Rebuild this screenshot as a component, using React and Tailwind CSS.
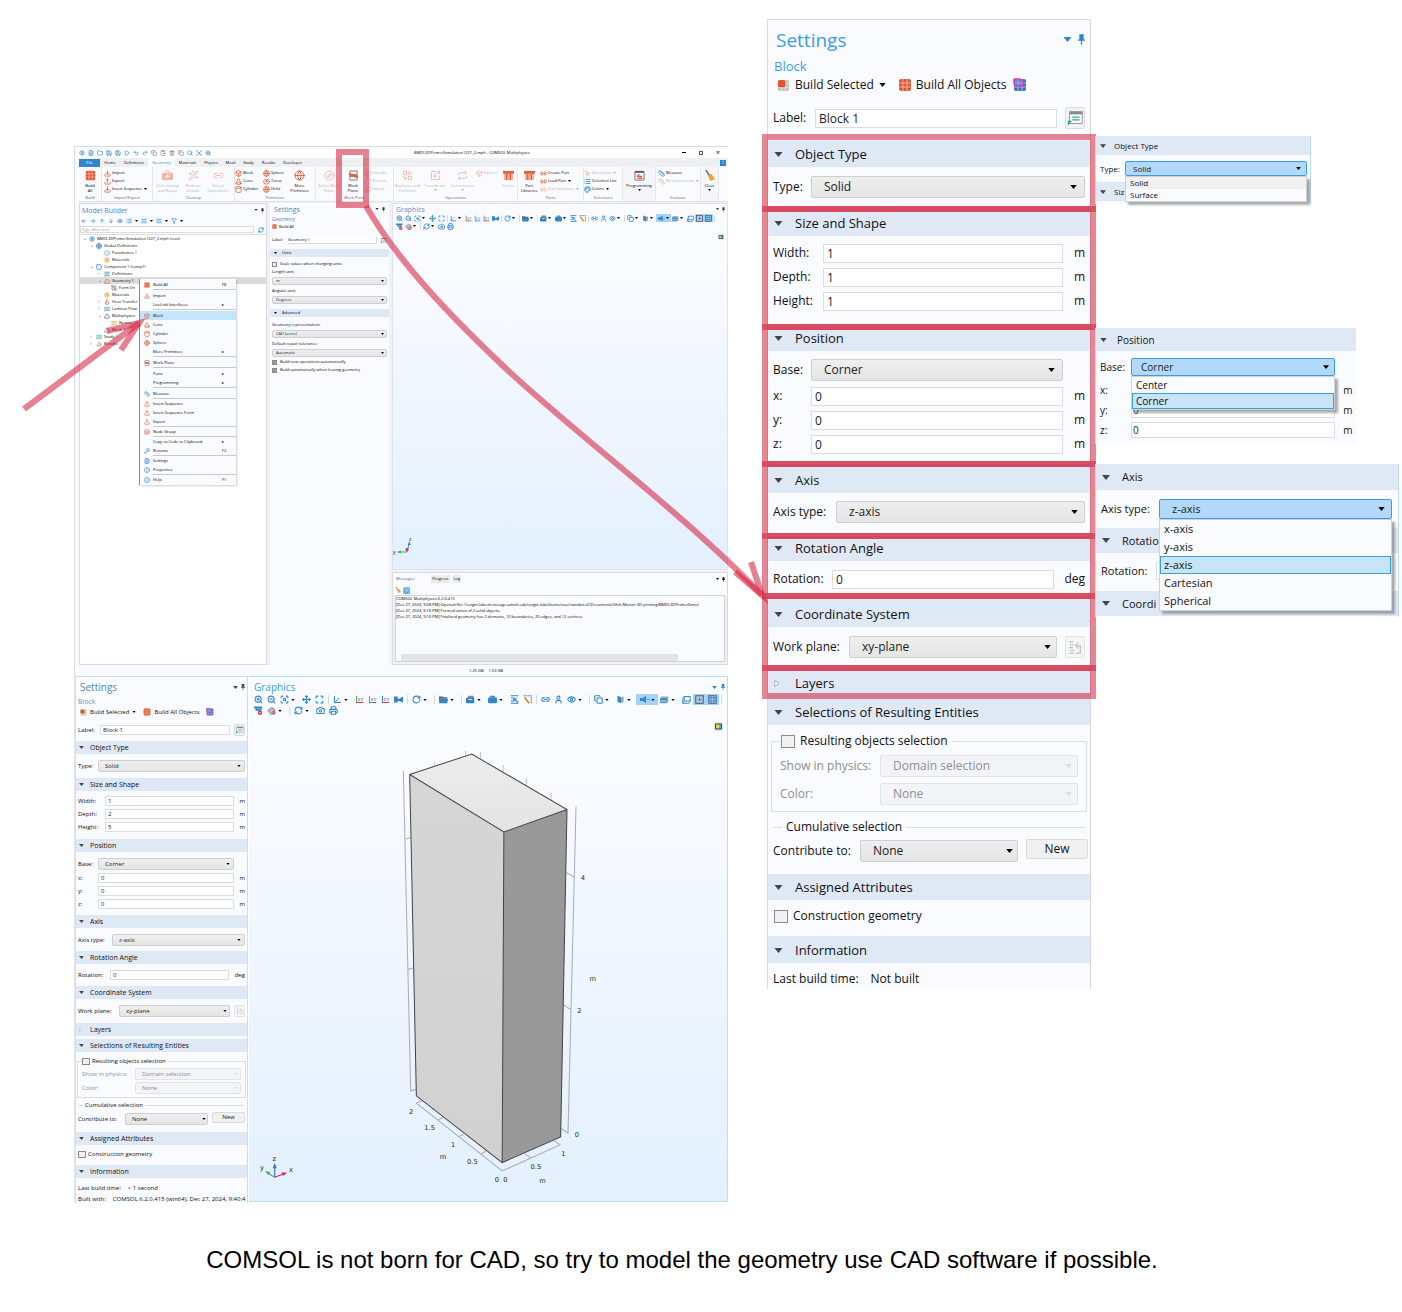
import React, { useId } from "react";
import {
  ZoomIn, ZoomOut, Search, Move, Maximize, Axis3d, RotateCw, Folder, Printer, Camera, Link2, Box,
  Cylinder, Cone, Torus, Globe, Ruler, Trash2, Brush, Layers, Download, Upload, Save, Undo2, Redo2, Copy,
  ClipboardPaste, FileText, ScanSearch, MousePointer, User, Eye, Square, RefreshCw, Eraser, Play, Wand2, Briefcase,
  Compass, Combine, Scaling, Repeat, BookOpen, List, Palette, Terminal, ArrowLeft, ArrowRight, ArrowUp, ArrowDown,
  AlignJustify, Funnel, Settings as Gear, Info, Flame, Waves, Triangle, Wrench, ChartNoAxesColumn,
} from "lucide-react";

/* ---------- shared controls ---------- */

function Caret({ className = "w-2 h-[5px] text-black" }) {
  return (
    <svg viewBox="0 0 8 5" className={className} fill="currentColor" aria-hidden="true">
      <path d="M0 0h8L4 5z" />
    </svg>
  );
}

function PinIcon({ className }) {
  return (
    <svg viewBox="0 0 8 12" className={className} fill="currentColor" aria-hidden="true">
      <path d="M1.500 0h5v6H8v1.500H0V6h1.500zM3.300 7.500h1.400V12H3.300z" />
    </svg>
  );
}

function Select({ id, value, className, caret, disabled, label, tone }) {
  return (
    <span className="relative flex flex-1 min-w-0 items-center">
      <select
        id={id}
        aria-label={label}
        disabled={disabled}
        defaultValue={value}
        className={
          "appearance-none w-full border rounded-[2px] outline-none " +
          (tone || (disabled ? "bg-[#f3f4f7] border-[#e2e3e6] text-[#8d8f93] opacity-100 " : "bg-linear-to-b from-[#efefef] to-[#e5e5e5] border-[#cfcfcf] text-[#1c1c1c] ")) +
          " " + className
        }
      >
        <option>{value}</option>
      </select>
      <span className="pointer-events-none absolute right-[3%] flex">
        <Caret className={caret + (disabled ? " text-[#dcdce0]" : " text-black")} />
      </span>
    </span>
  );
}

const inputTone = "min-w-0 flex-1 bg-white border border-[#dcdcdc] outline-none text-[#1c1c1c] ";

function Field({ k, label, lw, value, unit, uw }) {
  const id = useId();
  return (
    <div className={"flex items-center " + k.row}>
      <label htmlFor={id} className={"shrink-0 whitespace-nowrap " + lw}>{label}</label>
      <input id={id} defaultValue={value} className={inputTone + k.input} />
      {unit && <span className={"shrink-0 text-right " + uw}>{unit}</span>}
    </div>
  );
}

function Choice({ k, label, lw, value, pad = "", disabled, after }) {
  const id = useId();
  return (
    <div className={"flex items-center " + k.row + " " + pad}>
      <label htmlFor={id} className={"shrink-0 whitespace-nowrap " + lw}>{label}</label>
      <Select id={id} value={value} className={k.select} caret={k.caret} disabled={disabled} />
      {after}
    </div>
  );
}

function Tick({ k, label, checked }) {
  return (
    <label className={"flex items-center whitespace-nowrap " + k.tickGap}>
      <input type="checkbox" defaultChecked={checked} className={"appearance-none border border-[#8b8b8b] bg-[#f1f1f1] " + k.tick} />
      {label}
    </label>
  );
}

function Section({ k, title, size, head, body, children, marked, closed }) {
  return (
    <section className={"relative flex flex-col " + size}>
      <div className={"flex items-end shrink-0 bg-[#dfe8f5] " + head}>
        <h3 className={"flex items-center whitespace-nowrap " + k.head}>
          {closed ? (
            <svg viewBox="0 0 6 8" className={k.closed} fill="#fff" stroke="#a9adb3" aria-hidden="true"><path d="M.8 .8v6.4L5 4z" /></svg>
          ) : (
            <Caret className={k.headCaret} />
          )}
          {title}
        </h3>
      </div>
      <div className={body}>{children}</div>
      {marked && <div className="pointer-events-none absolute z-10 -inset-x-1.5 -inset-y-[3px] border-[6px] border-[#d4203c]/55" />}
    </section>
  );
}

function GridIcon({ kind, className }) {
  const base = kind === "all" ? "#e2562f" : kind === "blue" ? "#3f6fc0" : "#c3c3c3";
  return (
    <svg viewBox="0 0 14 14" className={className} aria-hidden="true">
      <rect x="1" y="1" width="12" height="12" rx="2" fill={base} />
      <path d="M5 1v12M9 1v12M1 5h12M1 9h12" stroke="#fff" strokeWidth=".9" opacity=".6" />
      {kind === "sel" && <rect x="1" y="1" width="8" height="8" rx="2" fill="#e2562f" />}
      {kind === "blue" && <path d="M1 1h6l3 2v5H3L1 6z" fill="#8f8fe0" fillOpacity=".6" stroke="#d43fb4" strokeWidth="1.4" />}
    </svg>
  );
}

function LabelIcon({ className }) {
  return (
    <svg viewBox="0 0 20 20" className={className} aria-hidden="true">
      <rect x="4" y="3" width="14" height="13" fill="#fff" stroke="#8c8c8c" />
      <path d="M4 3h14v3H4z" fill="#8c8c8c" />
      <path d="M7 9h8M7 12h8" stroke="#27a98b" strokeWidth="1.3" />
      <path d="M2 18v-5h5L5.500 14.500 2.500 18z" fill="#27a98b" />
    </svg>
  );
}

const LG = {
  root: "text-[12px] leading-[14px]",
  row: "h-6",
  input: "h-[19px] px-[3px] text-[12px]",
  select: "h-[22px] pl-3 text-[12px]",
  caret: "w-[7px] h-[4px]",
  head: "h-[26px] text-[13px] pl-1.5",
  headCaret: "w-[9px] h-[5px] mr-3 text-[#444]",
  closed: "w-[6px] h-[9px] mr-[15px]",
  tick: "w-[14px] h-[13px]",
  tickGap: "gap-[5px]",
  unit: "w-[22px]",
};
const SM = {
  root: "text-[6px] leading-[8px]",
  row: "h-[13px]",
  input: "h-[10px] px-[2px] text-[6px]",
  select: "h-[12px] pl-1.5 text-[6px]",
  caret: "w-[4px] h-[2px]",
  head: "h-[13px] text-[7px] pl-[3px]",
  headCaret: "w-[5px] h-[3px] mr-[6px] text-[#444]",
  closed: "w-[3px] h-[5px] mr-[8px]",
  tick: "w-[8px] h-[7px]",
  tickGap: "gap-[2px]",
  unit: "w-[11px]",
};

function BlockSettings({ big }) {
  const k = big ? LG : SM;
  const c = (a, b) => (big ? a : b);
  const body = c("px-[5px]", "px-[2px]");
  const dims = c(["1", "1", "1"], ["1", "2", "5"]);
  const m = c(big, false);
  return (
    <aside className={"relative flex flex-col bg-[#fafbff] border-l border-r border-t border-[#d9dbe0] text-[#111] " + k.root}>
      <header className={c("h-[117px] px-[5px]", "h-[64px] px-[2px]")}>
        <div className={"flex items-center " + c("h-[38px] pt-[1px] pl-[3px]", "h-[20px] pl-[2px]")}>
          <h2 className={"flex-1 " + c("text-[19px] text-[#3a9bea]", "text-[10px] text-[#5b83b5]")}>Settings</h2>
          <Caret className={c("w-[9px] h-[5px] text-[#2f86cc] mr-[6px]", "w-[5px] h-[3px] text-[#444] mr-[3px]")} />
          <PinIcon className={c("w-[7px] h-[11px] text-[#2f86cc]", "w-[4px] h-[6px] text-[#444]")} />
        </div>
        <div className={c("text-[13px] h-[17px] leading-[17px] pl-px text-[#3a9bea]", "text-[7px] h-[9px] leading-[9px] text-[#6d94c4]")}>Block</div>
        <div className={"flex items-center " + c("h-[20px] pl-1", "h-[12px] pl-0.5")}>
          <button className={"flex items-center whitespace-nowrap " + c("gap-[5px]", "gap-[3px]")}>
            <GridIcon kind="sel" className={c("w-[13px] h-[13px]", "w-[7px] h-[7px]")} />Build Selected
            <Caret className={c("w-[7px] h-[4px]", "w-[4px] h-[2px]")} />
          </button>
          <button className={"flex items-center whitespace-nowrap " + c("gap-[4px] ml-[12px]", "gap-[3px] ml-[7px]")}>
            <GridIcon kind="all" className={c("w-[14px] h-[14px]", "w-[8px] h-[8px]")} />Build All Objects
          </button>
          <button aria-label="Build preview" className={c("ml-[7px]", "ml-[6px]")}>
            <GridIcon kind="blue" className={c("w-[14px] h-[14px]", "w-[8px] h-[8px]")} />
          </button>
        </div>
        <div className={"flex items-center " + c("mt-[11px] h-6", "mt-[5px] h-[13px]")}>
          <label htmlFor={c("lbl-l", "lbl-s")} className={c("w-[42px]", "w-[22px]")}>Label:</label>
          <input id={c("lbl-l", "lbl-s")} defaultValue="Block 1" className={inputTone + k.input} />
          <button aria-label="Edit label" className={"border border-[#dcdcdc] bg-[#f3f3f3] rounded-[2px] " + c("ml-2 w-5 h-[22px]", "ml-1 w-[11px] h-[12px]")}>
            <LabelIcon className="w-full h-full" />
          </button>
        </div>
      </header>

      <Section k={k} marked={m} title="Object Type" size={c("h-[72px]", "h-[37px]")} head={c("h-[26px] mt-1", "h-[13px]")} body={body + c(" pt-2", " pt-[5px]")}>
        <Choice k={k} label="Type:" lw={c("w-[38px]", "w-[20px]")} value="Solid" />
      </Section>
      <Section k={k} marked={m} title="Size and Shape" size={c("h-[118px]", "h-[61px]")} head={c("h-[27px]", "h-[13px]")} body={body + c(" pt-[5px]", " pt-[3px]")}>
        {["Width:", "Depth:", "Height:"].map((l, i) => (
          <Field key={l} k={k} label={l} lw={c("w-[50px]", "w-[27px]")} value={dims[i]} unit="m" uw={k.unit} />
        ))}
      </Section>
      <Section k={k} marked={m} title="Position" size={c("h-[137px]", "h-[76px]")} head={c("h-[24px]", "h-[13px]")} body={body + c(" pt-[7px]", " pt-[5px]")}>
        <Choice k={k} label="Base:" lw={c("w-[38px]", "w-[20px]")} value="Corner" after={<span className={k.unit} />} />
        <div className={c("mt-0.5", "mt-px")}>
          {["x:", "y:", "z:"].map((l) => (
            <Field key={l} k={k} label={l} lw={c("w-[38px]", "w-[20px]")} value="0" unit="m" uw={k.unit} />
          ))}
        </div>
      </Section>
      <Section k={k} marked={m} title="Axis" size={c("h-[72px]", "h-[36px]")} head={c("h-[29px]", "h-[13px]")} body={body + c(" pt-[7px]", " pt-[5px]")}>
        <Choice k={k} label="Axis type:" lw={c("w-[63px]", "w-[34px]")} value="z-axis" />
      </Section>
      <Section k={k} marked={m} title="Rotation Angle" size={c("h-[60px]", "h-[35px]")} head={c("h-[25px]", "h-[13px]")} body={body + c(" pt-[6px]", " pt-[4px]")}>
        <Field k={k} label="Rotation:" lw={c("w-[59px]", "w-[32px]")} value="0" unit="deg" uw={c("w-[31px]", "w-[16px]")} />
      </Section>
      <Section k={k} marked={m} title="Coordinate System" size={c("h-[72px]", "h-[37px]")} head={c("h-[31px]", "h-[13px]")} body={body + c(" pt-2", " pt-[5px]")}>
        <Choice k={k} label="Work plane:" lw={c("w-[76px]", "w-[41px]")} value="xy-plane" after={
          <button disabled aria-label="Go to source" className={"flex items-center justify-center border border-[#e3e3e3] bg-[#f5f5f5] rounded-[2px] " + c("ml-2 w-5 h-[22px]", "ml-1 w-[11px] h-[12px]")}>
            <svg viewBox="0 0 14 16" className="w-3/4 h-3/4" fill="none" stroke="#c4c4c4" strokeWidth="1.400" aria-hidden="true"><path d="M1 2h4M2 5h4M1 8h4M2 11h4M1 14h5M9 6h4v8H8M11 3L8 6l3 3" /></svg>
          </button>
        } />
      </Section>
      <Section k={k} marked={m} closed title="Layers" size={c("h-[28px]", "h-[16px]")} head={c("h-[28px]", "h-[13px]")} body="" />
      <Section k={k} title="Selections of Resulting Entities" size={c("h-[178px]", "h-[93px]")} head={c("h-[29px]", "h-[13px]")} body="">
        <fieldset className={"border border-[#dcdde1] text-[#8d8f93] " + c("mx-[3px] mt-[9px] pb-[3px] px-[8px]", "mx-px mt-[5px] pb-[2px] px-[4px]")}>
          <legend className={"text-[#111] " + c("px-[1px] pr-1 h-[14px]", "h-[8px] pr-[2px]")}>
            <Tick k={k} label="Resulting objects selection" />
          </legend>
          <div className={c("pt-1", "pt-[2px]")}>
            <Choice k={{ ...k, row: c("h-7", "h-[14px]") }} label="Show in physics:" lw={c("w-[100px]", "w-[53px]")} value="Domain selection" disabled />
            <Choice k={{ ...k, row: c("h-7", "h-[14px]") }} label="Color:" lw={c("w-[100px]", "w-[53px]")} value="None" disabled />
          </div>
        </fieldset>
        <div className={body}>
          <div className={"flex items-center " + c("mt-2 h-[14px] gap-1", "mt-[3px] h-[8px] gap-[2px]")}>
            <span className={"h-px bg-[#dcdde1] " + c("w-[9px]", "w-[5px]")} />
            Cumulative selection
            <span className="h-px flex-1 bg-[#dcdde1]" />
          </div>
          <Choice k={k} pad={c("mt-[5px]", "mt-[3px]")} label="Contribute to:" lw={c("w-[87px]", "w-[47px]")} value="None" after={
            <button className={"border border-[#dcdcdc] bg-[#f1f1f2] rounded-[2px] self-start " + c("ml-2 -mr-[3px] w-[62px] h-5 leading-[18px]", "ml-1 w-[33px] h-[11px] leading-[9px]")}>New</button>
          } />
        </div>
      </Section>
      <Section k={k} title="Assigned Attributes" size={c("h-[62px]", "h-[33px]")} head={c("h-[26px]", "h-[13px]")} body={body + c(" pt-[9px] pl-[6px]", " pt-[5px]")}>
        <Tick k={k} label="Construction geometry" />
      </Section>
      <Section k={k} title="Information" size={c("h-[53px]", "h-[38px]")} head={c("h-[27px]", "h-[13px]")} body={body}>
        <dl className={"flex " + c("pt-[9px] gap-3", "pt-[6px] gap-[7px]")}><dt>Last build time:</dt><dd>{c("Not built", "< 1 second")}</dd></dl>
        {!big && <dl className="flex pt-[3px] gap-[7px] whitespace-nowrap"><dt>Built with:</dt><dd>COMSOL 6.2.0.415 (win64), Dec 27, 2024, 9:40:4</dd></dl>}
      </Section>
    </aside>
  );
}

/* ---------- graphics toolbar ---------- */

const TOOLS = [
  ZoomIn, ZoomOut, ScanSearch, "v", Move, Maximize, "|", Axis3d, "v",
  "xy", "yz", "xz", "cam", "|", RotateCw, "v", "|", "folder", "v", "|", "case", "v", "case2", "v", "pick", "wand", "|",
  Link2, User, Eye, "v", "|", Copy, "v", "layer", "v", "HL", "win", "v", "frame", "HA", "HG", "|",
];

function MiniIcon({ t, size }) {
  const p = { viewBox: "0 0 12 12", className: size, "aria-hidden": true };
  const B = "#2f86cc";
  if (t === "xy" || t === "yz" || t === "xz") {
    const col = t === "xz" ? B : "#4caf50";
    return (
      <svg {...p} fill="none">
        <path d="M2 1v10" stroke={col} strokeWidth="1.400" />
        <path d="M2 10h9" stroke={t === "yz" ? B : "#d8336b"} strokeWidth="1.400" />
        <path d="M4 4l3 4M7 4L4 8M8 4l1.500 2L11 4M9.500 6v2" stroke="#777" strokeWidth=".8" />
      </svg>
    );
  }
  if (t === "cam") return <svg {...p} fill={B}><path d="M0 2h5v8H0zM5 5h2l5-3v8L7 8H5z" /></svg>;
  if (t === "folder") return <svg {...p}><path d="M0 2h5l1 1h5v2H2L0 10z" fill="#666" /><path d="M1 5h11l-1 6H0z" fill={B} /></svg>;
  if (t === "case") return <svg {...p}><path d="M1 5l2-4h7l1 4z" fill="#888" /><rect y="4" width="11" height="7" rx="1" fill={B} /><path d="M3 6h5" stroke="#fff" /></svg>;
  if (t === "case2") return <svg {...p} fill={B}><path d="M3 1h6v2H3z" /><rect y="3" width="12" height="8" rx="2" /></svg>;
  if (t === "pick") return <svg {...p} fill="none" stroke={B} strokeWidth="1.500"><path d="M1 1h10M1 4h5M1 8h3M1 11h10M5 5l6 5M5 5v4M5 5h4" /></svg>;
  if (t === "hide") return <svg {...p} fill="none"><path d="M0 2h11M2 5h8" stroke={B} strokeWidth="2.500" /><circle cx="8" cy="9" r="3" fill="#d8336b" /><path d="M6.500 9h3" stroke="#fff" /></svg>;
  if (t === "pal") return <svg {...p} fill="none"><path d="M1 6l5-4 4 2v6l-5 1z" fill="#b9bcc2" stroke="#777" /><circle cx="9" cy="9" r="2" stroke="#d8336b" /></svg>;
  if (t === "wand") return <svg {...p} fill="none" strokeWidth="1.500"><path d="M1 1h10v10" stroke={B} strokeDasharray="2 1" /><path d="M2 3l6 8" stroke="#e58a2a" strokeWidth="2.500" /></svg>;
  if (t === "layer") return <svg {...p}><path d="M2 1l5 2v8L2 9z" fill={B} /><path d="M7 3l3-1v7l-3 2z" fill="#999" /></svg>;
  if (t === "win") return <svg {...p}><rect x="1" y="2" width="10" height="8" fill="#9aa" /><rect y="4" width="9" height="7" fill={B} opacity=".8" /><path d="M1 8h7" stroke="#fff" /></svg>;
  if (t === "frame") return <svg {...p} fill="none" stroke={B} strokeWidth="1.300"><path d="M3 2h8v6H3zM1 11l2-3M3 2L1 5v6M1 11h8l2-3" /></svg>;
  if (t === "HA") return <svg {...p} fill="none" strokeWidth="1.300"><rect x="1" y="1" width="10" height="10" stroke="#555" /><path d="M6 3v5" stroke={B} /><path d="M6 8L3 5" stroke="#4caf50" /><path d="M6 8l3-3" stroke="#d8336b" /></svg>;
  if (t === "HG") return <svg {...p} fill="none" stroke={B} strokeWidth="1.200"><rect x="1" y="1" width="10" height="10" stroke="#555" /><path d="M4 1v10M8 1v10M1 4h10M1 8h10" /></svg>;
  if (t === "HL") return <svg {...p} fill={B}><path d="M0 4h4l4-3v10L4 8H0z" /><path d="M9 6h3" stroke={B} /></svg>;
  const I = t;
  return <I className={size + " text-[#2f86cc]"} strokeWidth={2.8} />;
}

function ToolRow({ items, big }) {
  const slot = big ? "w-[13px] h-[11px]" : "w-[9px] h-[8px]";
  const size = big ? "w-[9px] h-[9px]" : "w-[7px] h-[7px]";
  return (
    <div className="flex items-center overflow-hidden">
      {items.map((t, i) => {
        if (t === "v") return <Caret key={i} className={"shrink-0 text-black " + (big ? "w-[4px] h-[2px] mr-[5px]" : "w-[3px] h-[2px] mr-[3px]")} />;
        if (t === "|") return <span key={i} className={"shrink-0 border-l border-[#d5d8de] " + (big ? "w-[3px] h-[9px] ml-[2px]" : "w-[2px] h-[7px] ml-px")} />;
        if (t === "HL") {
          return (
            <button key={i} aria-label="Scene light" className={"flex shrink-0 items-center justify-center bg-[#a3d3fb] " + (big ? "w-[22px] gap-[2px] h-[11px]" : "w-[15px] gap-px h-[8px]")}>
              <MiniIcon t={t} size={size} /><Caret className={big ? "w-[4px] h-[2px]" : "w-[3px] h-[2px]"} />
            </button>
          );
        }
        const hl = t === "HA" || t === "HG";
        return (
          <button key={i} aria-label={"Tool " + (i + 1)} className={"flex shrink-0 items-center justify-center " + slot + (hl ? " bg-[#a3d3fb]" : "")}>
            <MiniIcon t={t} size={size} />
          </button>
        );
      })}
    </div>
  );
}

function GraphicsHead({ big }) {
  return (
    <div className={big ? "pl-[3px]" : "pl-0.5"}>
      <div className={"flex items-center " + (big ? "h-[17px] pt-[3px] pl-[2px] pr-[2px]" : "h-[10px] pl-px pr-[2px]")}>
        <h2 className={"flex-1 leading-none " + (big ? "text-[10px] text-[#3a9bea]" : "text-[7px] text-[#6d8fc0]")}>Graphics</h2>
        <Caret className={big ? "w-[5px] h-[3px] mr-1 text-[#2f86cc]" : "w-[3px] h-[2px] mr-[3px] text-[#333]"} />
        <PinIcon className={big ? "w-[4px] h-[6px] text-[#2f86cc]" : "w-[3px] h-[5px] text-[#333]"} />
      </div>
      <ToolRow items={TOOLS} big={big} />
      <ToolRow items={["hide", "pal", "v", "|", RefreshCw, "v", Camera, Printer]} big={big} />
    </div>
  );
}

function LegendIcon({ className }) {
  return (
    <svg viewBox="0 0 9 9" className={className} aria-hidden="true">
      <rect x="0" y="0" width="9" height="9" rx="1.500" fill="#e4e6ea" />
      <rect x="1" y="1.500" width="7" height="6" rx="1" fill="#1c3f9a" />
      <rect x="2" y="2.500" width="3" height="4" fill="#f2d13b" />
      <rect x="5" y="2.500" width="2" height="4" fill="#4fc0d8" />
    </svg>
  );
}

/* ---------- main window, upper half ---------- */

const O = "text-[#e0623a]";
const F = "text-[#f0b8a6]";

function Tall({ icon: I, lines, w, faded, caret }) {
  return (
    <button className={"flex shrink-0 flex-col items-center pt-[3px] " + w + (faded ? " text-[#b5b5b5]" : " text-black")}>
      <I className={"w-[11px] h-[11px] mb-[2px] " + (faded ? F : O)} />
      {lines.map((l) => <span key={l} className="leading-[5px] whitespace-nowrap">{l}</span>)}
      {caret && <Caret className="w-[3px] h-[2px] mt-px" />}
    </button>
  );
}

function Stack({ items, w, faded }) {
  return (
    <div className={"flex shrink-0 flex-col pt-[2px] " + w}>
      {items.map(([I, l, v, f, tint]) => (
        <button key={l} className={"flex items-center gap-px h-[8px] whitespace-nowrap " + (faded || f ? "text-[#b5b5b5]" : "text-black")}>
          <I className={"w-[7px] h-[7px] " + (faded || f ? F : tint || O)} strokeWidth={2.8} />{l}{v ? <Caret className="w-[3px] h-[2px] ml-px" /> : null}
        </button>
      ))}
    </div>
  );
}

function Group({ name, children, className = "" }) {
  return (
    <div className={"flex flex-col shrink-0 border-r border-[#e6e7eb] " + className}>
      <div className="flex h-[29px]">{children}</div>
      <div className="text-center text-[#666] leading-[6px]">{name}</div>
    </div>
  );
}

function SolidSquare({ className }) {
  return <GridIcon kind="all" className={className} />;
}

function SolidBox({ className }) {
  return (
    <svg viewBox="0 0 12 12" className={className} aria-hidden="true">
      <rect x="1" y="2" width="10" height="9" fill="#f3b29c" />
      <path d="M0 1h12v3H0z" fill="#e0623a" />
      <path d="M4 4v7M8 4v7" stroke="#e0623a" strokeWidth="1.500" />
    </svg>
  );
}

function ToolCase({ className }) {
  return (
    <svg viewBox="0 0 12 12" className={className} aria-hidden="true">
      <path d="M4 3V1h4v2" fill="none" stroke="currentColor" />
      <rect x="0" y="3" width="12" height="8" rx="1" fill="currentColor" />
      <path d="M6 5v4M4 7h4" stroke="#fff" strokeWidth="1.200" />
    </svg>
  );
}

function Broom({ className }) {
  return (
    <svg viewBox="0 0 12 12" className={className} aria-hidden="true">
      <path d="M2 0l4 6" stroke="#666" strokeWidth="1.500" />
      <path d="M4 6l4-2 4 6-5 2z" fill="#efa23c" />
    </svg>
  );
}

function ProgramIcon({ className }) {
  return (
    <svg viewBox="0 0 12 12" className={className} fill="none" aria-hidden="true">
      <path d="M1 2h10" stroke="#555" strokeWidth="2" /><path d="M1 2v9h10V2" stroke="#777" />
      <path d="M3 7h6M4 9h5M6 5L3 7" stroke="#e0623a" strokeWidth="1.400" />
    </svg>
  );
}

function WorkPlaneIcon({ className }) {
  return (
    <svg viewBox="0 0 12 12" className={className} fill="none" aria-hidden="true">
      <path d="M2 1h8v4H2zM2 7h8v4H2z" stroke="#777" />
      <path d="M1 3l10 3v3L1 6z" fill="#e0623a" />
    </svg>
  );
}

const TREE = [
  [0, "v", Gear, "#2f86cc", "BMDL3DPrimerSimulation1227_2.mph (root)"],
  [1, "v", Globe, "#2f86cc", "Global Definitions"],
  [2, "", Info, "#7ab3e0", "Parameters 1"],
  [2, "", Gear, "#e89a2e", "Materials"],
  [1, "v", Square, "#2f86cc", "Component 1 (comp1)"],
  [2, ">", AlignJustify, "#2f86cc", "Definitions"],
  [2, "v", Triangle, "#e0623a", "Geometry 1"],
  [3, "", Combine, "#888", "Form Un"],
  [2, "", Gear, "#e89a2e", "Materials"],
  [2, ">", Flame, "#e0623a", "Heat Transfer"],
  [2, ">", Waves, "#2f86cc", "Laminar Flow"],
  [2, "v", Triangle, "#666", "Multiphysics"],
  [3, "", Waves, "#e89a2e", "Noniso"],
  [2, "", Triangle, "#888", "Mesh 1"],
  [1, ">", Waves, "#27a98b", "Study 1"],
  [1, ">", ChartNoAxesColumn, "#888", "Results"],
];
const INDENT = ["pl-[3px]", "pl-[10px]", "pl-[18px]", "pl-[25px]"];

const MENU = [
  [SolidSquare, "Build All", "F8"], "-", [Download, "Import"], [null, "LiveLink Interfaces", ">"], "-",
  [Box, "Block", "", true], [Cone, "Cone"], [Cylinder, "Cylinder"], [Globe, "Sphere"], [null, "More Primitives", ">"], "-",
  [WorkPlaneIcon, "Work Plane"], "-", [null, "Parts", ">"], [null, "Programming", ">"], "-", [Ruler, "Measure"], "-",
  [Upload, "Insert Sequence"], [Upload, "Insert Sequence From"], [Upload, "Export"], "-", [Layers, "Node Group"], "-",
  [null, "Copy as Code to Clipboard", ">"], [Wrench, "Rename", "F2"], "-", [FileText, "Settings"], [Info, "Properties"], "-", [Info, "Help", "F1"],
];

function ContextMenu() {
  return (
    <ul role="menu" className="absolute left-[59px] top-[75px] w-[97px] border-l border-[#8a8a8a] bg-[#fafbff] pt-px pb-px shadow-[1px_1px_2px_#0003] text-black">
      {MENU.map((m, i) => {
        if (m === "-") return <li key={i} role="separator" className={"ml-[13px] h-px bg-[#c9c9cd] " + (i < 16 ? "mb-px" : "")} />;
        const [I, l, hint, on] = m;
        const blue = i > 23 || l === "Measure";
        return (
          <li key={i}>
            <button role="menuitem" className={"flex w-full items-center h-[9px] " + (on ? "bg-[#c4e4f9]" : "")}>
              <span className="w-[13px] flex justify-center">{I && <I className={"w-[6px] h-[6px] " + (blue ? "text-[#2f86cc]" : O)} strokeWidth={2.5} />}</span>
              <span className="flex-1 text-left whitespace-nowrap">{l}</span>
              <span className="w-[14px] text-left">{hint === ">" ? "\u25B8" : hint}</span>
            </button>
          </li>
        );
      })}
    </ul>
  );
}

function PaneTitle({ children }) {
  return (
    <div className="flex items-center h-[12px] pl-0.5 pr-[2px]">
      <h2 className="flex-1 text-[7px] leading-none text-[#5b83b5]">{children}</h2>
      <Caret className="w-[4px] h-[2px] mr-[3px] text-[#333]" />
      <PinIcon className="w-[3px] h-[5px] text-[#333]" />
    </div>
  );
}

function TinySelect({ label, value }) {
  const id = useId();
  return (
    <div className="flex flex-col">
      <label htmlFor={id} className="h-[9px] leading-[9px] whitespace-nowrap">{label}</label>
      <div className="flex h-[10px]"><Select id={id} value={value} className="h-[8px] pl-[3px] text-[4px]" caret="w-[3px] h-[2px]" /></div>
    </div>
  );
}

const TINY = { tick: "w-[5px] h-[5px]", tickGap: "gap-[3px]" };

function MainWindow() {
  return (
    <div className="flex flex-col h-[530px] overflow-hidden border-l border-t border-[#d9dbe0] bg-[#fafbff] text-[4px] leading-[6px] text-black">
      <div className="flex items-center h-[11px] px-[3px] bg-white gap-[2px]">
        {[Gear, FileText, Folder, Save, Save, Play, Undo2, Redo2, Copy, ClipboardPaste, Trash2, Copy, Search, ScanSearch, ZoomIn].map((I, i) => (
          <button key={i} aria-label={"Quick action " + (i + 1)} className="flex w-[7px] justify-center"><I className={"w-[6px] h-[6px] " + (i > 7 && i < 12 ? "text-[#888]" : "text-[#2f86cc]")} strokeWidth={2.5} /></button>
        ))}
        <span className="flex-1 text-center pl-[154px] whitespace-nowrap">BMDL3DPrimerSimulation1227_2.mph - COMSOL Multiphysics</span>
        <span className="flex w-[146px] justify-end gap-[13px] pr-[5px] items-center">
          <button aria-label="Minimize" className="w-[4px] h-px bg-black" />
          <button aria-label="Maximize" className="w-[4px] h-[4px] border border-[#555]" />
          <button aria-label="Close" className="text-[7px] leading-none">×</button>
        </span>
      </div>
      <nav className="flex items-center h-[9px] ml-1 bg-[#eff0f2] pr-[2px]">
        <button className="w-[21px] h-[8px] bg-[#2f86cc] text-white">File</button>
        {[["Home", "w-[20px]"], ["Definitions", "w-[28px]"], ["Geometry", "w-[27px]"], ["Materials", "w-[25px]"], ["Physics", "w-[22px]"], ["Mesh", "w-[17px]"], ["Study", "w-[19px]"], ["Results", "w-[21px]"], ["Developer", "w-[27px]"]].map(([t, w]) => (
          <button key={t} className={"h-[9px] " + w + (t === "Geometry" ? " bg-[#fafbff] text-[#2f86cc]" : "")}>{t}</button>
        ))}
        <span className="flex-1" />
        <button className="w-[6px] h-[6px] bg-[#2f86cc] text-white leading-[6px]">?</button>
      </nav>
      <div className="flex h-[35px] ml-1 border-b border-[#dfe1e6] overflow-hidden">
        <Group name="Build" className="w-[23px]"><Tall icon={SolidSquare} lines={["Build", "All"]} w="w-[22px]" /></Group>
        <Group name="Import/Export" className="w-[51px]">
          <Stack w="w-full pl-[2px]" items={[[Download, "Import"], [Upload, "Export"], [Download, "Insert Sequence", 1]]} />
        </Group>
        <Group name="Cleanup" className="w-[82px]">
          <Tall faded icon={ToolCase} lines={["Defeaturing", "and Repair"]} w="w-[29px]" />
          <Tall faded icon={Wand2} lines={["Remove", "Details"]} w="w-[22px]" />
          <Tall faded icon={Link2} lines={["Virtual", "Operations"]} w="w-[28px]" />
        </Group>
        <Group name="Primitives" className="w-[81px]">
          <Stack w="w-[28px]" items={[[Box, "Block"], [Cone, "Cone"], [Cylinder, "Cylinder"]]} />
          <Stack w="w-[23px]" items={[[Globe, "Sphere"], [Torus, "Torus"], [Globe, "Helix"]]} />
          <Tall icon={Globe} lines={["More", "Primitives"]} w="w-[27px]" />
        </Group>
        <Group name="Work Plane" className="w-[78px]">
          <Tall faded icon={Compass} lines={["Select Work", "Plane"]} w="w-[26px]" />
          <Tall icon={WorkPlaneIcon} lines={["Work", "Plane"]} w="w-[22px]" />
          <Stack faded w="w-[28px]" items={[[Box, "Extrude"], [RotateCw, "Revolve"], [Scaling, "Sweep"]]} />
        </Group>
        <Group name="Operations" className="w-[124px]">
          <Tall faded icon={Combine} lines={["Booleans and", "Partitions"]} w="w-[27px]" />
          <Tall faded icon={Scaling} lines={["Transforms"]} w="w-[28px]" caret />
          <Tall faded icon={Repeat} lines={["Conversions"]} w="w-[27px]" caret />
          <Stack faded w="w-[22px]" items={[[Box, "Extract"]]} />
          <Tall faded icon={SolidBox} lines={["Delete"]} w="w-[20px]" />
        </Group>
        <Group name="Parts" className="w-[66px]">
          <Tall icon={SolidBox} lines={["Part", "Libraries"]} w="w-[22px]" />
          <Stack w="w-[42px]" items={[[Link2, "Create Part"], [Link2, "Load Part", 1], [Link2, "Part Instances", 1, 1]]} />
        </Group>
        <Group name="Selections" className="w-[39px]">
          <Stack w="w-[38px]" items={[[MousePointer, "Selections", 1, 1], [List, "Selection List", 0, 0, "text-[#2f86cc]"], [Palette, "Colors", 1, 0, "text-[#2f86cc]"]]} />
        </Group>
        <Group name="" className="w-[33px] bg-[#f5f6f9]"><Tall icon={ProgramIcon} lines={["Programming"]} w="w-[32px]" caret /></Group>
        <Group name="Evaluate" className="w-[45px]">
          <Stack w="w-[44px] pl-[2px]" items={[[Ruler, "Measure", 0, 0, "text-[#2f86cc]"], [Ruler, "Measurements", 1, 1]]} />
        </Group>
        <Group name="" className="w-[18px] bg-[#f5f6f9]"><Tall icon={Broom} lines={["Clear"]} w="w-[17px]" caret /></Group>
      </div>

      <div className="flex flex-1 min-h-0 ml-1 pt-px gap-[3px] bg-[#f0f1f4]">
        <section className="relative flex flex-col w-[188px] border border-[#d9dbe0] bg-white">
          <div className="bg-[#fafbff]">
            <PaneTitle>Model Builder</PaneTitle>
            <div className="flex items-center h-[9px] gap-[3px] px-px">
              {[ArrowLeft, ArrowRight, ArrowUp, ArrowDown, Eye, List, "v", AlignJustify, "v", AlignJustify, "v", Funnel, "v"].map((I, i) =>
                I === "v" ? <Caret key={i} className="w-[3px] h-[2px]" /> : (
                  <button key={i} aria-label={"Tree action " + (i + 1)}><I className="w-[6px] h-[6px] text-[#2f86cc]" strokeWidth={2.6} /></button>
                )
              )}
            </div>
            <div className="flex items-center h-[9px]">
              <input aria-label="Filter" placeholder="Type filter text" className="w-[174px] h-[7px] border border-[#dcdcdc] bg-white pl-px text-[4px]" />
              <button aria-label="Refresh" className="ml-1"><RefreshCw className="w-[6px] h-[6px] text-[#2f86cc]" strokeWidth={3} /></button>
            </div>
          </div>
          <ul className="border-t border-[#dcdcdc]">
            {TREE.map(([d, x, I, c, t], i) => (
              <li key={i} className={"flex items-center h-[7px] whitespace-nowrap " + INDENT[d] + (i === 6 ? " bg-[#dcdcdc]" : "")}>
                <span className="w-[4px] text-[5px] leading-none text-[#555]">{x === "v" ? "\u2304" : x === ">" ? "\u203A" : ""}</span>
                <I className="w-[6px] h-[6px] mx-[2px]" color={c} strokeWidth={3} />
                {t}
              </li>
            ))}
          </ul>
          <ContextMenu />
        </section>

        <section className="w-[119px] px-[2px] bg-[#fafbff]">
          <PaneTitle>Settings</PaneTitle>
          <div className="text-[5px] h-[8px] leading-[8px] text-[#5b83b5]">Geometry</div>
          <button className="flex items-center gap-[2px] h-[7px]"><SolidSquare className="w-[5px] h-[5px]" />Build All</button>
          <div className="flex items-center mt-[5px] h-[10px]">
            <label htmlFor="geo" className="w-[16px]">Label:</label>
            <input id="geo" defaultValue="Geometry 1" className="min-w-0 flex-1 h-[7px] border-b border-r border-[#dcdcdc] bg-white text-[4px]" />
            <LabelIcon className="w-[7px] h-[7px] ml-[3px]" />
          </div>
          <h3 className="flex items-center gap-[5px] h-[8px] mt-[4px] -mx-[2px] pl-[4px] bg-[#dfe8f5]"><Caret className="w-[3px] h-[2px]" />Units</h3>
          <div className="mt-[4px]"><Tick k={TINY} label="Scale values when changing units" /></div>
          <TinySelect label="Length unit:" value="m" />
          <TinySelect label="Angular unit:" value="Degrees" />
          <h3 className="flex items-center gap-[5px] h-[8px] mt-[4px] mb-[3px] -mx-[2px] pl-[4px] bg-[#dfe8f5]"><Caret className="w-[3px] h-[2px]" />Advanced</h3>
          <TinySelect label="Geometry representation:" value="CAD kernel" />
          <TinySelect label="Default repair tolerance:" value="Automatic" />
          <div className="flex flex-col gap-[2px] mt-px">
            {["Build new operations automatically", "Build automatically when leaving geometry"].map((l) => (
              <Tick key={l} k={{ ...TINY, tick: "w-[5px] h-[5px] checked:bg-[#999]" }} checked label={l} />
            ))}
          </div>
        </section>

        <div className="flex flex-1 min-w-0 flex-col gap-[2px]">
          <section className="flex flex-col h-[367px] border border-[#dde3ee] bg-linear-to-b from-[#fafbff] from-15% to-[#e4f0fe]">
            <GraphicsHead />
            <div className="flex justify-end pr-[3px] pt-[4px]"><LegendIcon className="w-[6px] h-[6px]" /></div>
            <div className="flex-1" />
            <svg viewBox="0 0 24 20" className="w-[24px] h-[20px] mb-[12px]" aria-label="Axis triad">
              <path d="M14 15H5" stroke="#4caf50" /><path d="M4 15l4-1.500v3z" fill="#4caf50" />
              <path d="M14 15l2-8" stroke="#2f86cc" /><path d="M16 4l2 4h-3z" fill="#2f86cc" />
              <circle cx="14" cy="12.500" r="1.600" fill="#d8336b" />
              <text x="0" y="16.500" fontSize="5">y</text><text x="16" y="3.500" fontSize="5">z</text>
            </svg>
          </section>
          <section className="flex flex-col flex-1 min-h-0 border border-[#d9dbe0]">
            <div className="flex items-center h-[12px] gap-[3px] px-[2px] bg-[#fafbff]">
              <button className="h-[8px] px-[1px] pr-[14px] text-[#2f6fb5]">Messages</button>
              <button className="h-[8px] px-[1px] bg-[#ebebed]">Progress</button>
              <button className="h-[8px] px-[1px] bg-[#ebebed]">Log</button>
              <span className="flex-1" />
              <Caret className="w-[3px] h-[2px]" /><PinIcon className="w-[3px] h-[5px]" />
            </div>
            <div className="flex items-center h-[10px] gap-[2px] px-[2px] bg-[#fafbff]">
              <button aria-label="Clear messages"><Broom className="w-[6px] h-[6px]" /></button>
              <button aria-label="Scroll lock" className="bg-[#8fc6f5]"><Eraser className="w-[7px] h-[7px] text-[#2f86cc]" /></button>
            </div>
            <div className="flex flex-1 min-h-0 flex-col mx-[2px] mb-[2px] border border-[#d0d2d7] bg-[#fafbff] whitespace-nowrap overflow-hidden">
              <p>COMSOL Multiphysics 6.2.0.415</p>
              <p>[Dec 27, 2024, 9:08 PM] Opened file: \\engin-labs.m.storage.umich.edu\engin-labs\home\user\windat.v2\Documents\Shih Marian 3D printing\BMDL3DPrimerSimul</p>
              <p>[Dec 27, 2024, 9:16 PM] Formed union of 2 solid objects.</p>
              <p>[Dec 27, 2024, 9:16 PM] Finalized geometry has 2 domains, 10 boundaries, 20 edges, and 12 vertices.</p>
              <span className="flex-1" />
              <div className="flex h-[7px] px-[5px]"><span className="w-[87%] bg-[#e3e3e5]" /></div>
            </div>
          </section>
        </div>
      </div>
      <footer className="flex h-[11px] items-center justify-center gap-[5px] pl-[169px]"><span>1.25 GB</span><span>1.53 GB</span></footer>
    </div>
  );
}

/* ---------- block plot ---------- */

const TICKS = [
  [990, 420, "4"], [980, 818, "2"], [972, 1188, "0"], [1016, 720, "m"], [932, 1245, "1"], [840, 1284, "0.5"], [866, 1327, "m"],
  [476, 1119, "2"], [522, 1167, "1.5"], [602, 1217, "1"], [568, 1255, "m"], [650, 1269, "0.5"], [733, 1322, "0"], [758, 1322, "0"],
];

function BlockPlot() {
  return (
    <svg viewBox="-3 -69 1431 1446" className="block w-full flex-1 min-h-0 font-['DejaVu_Sans']" role="img" aria-label="Block geometry, 1 by 2 by 5 metres">
      <defs>
        <linearGradient id="side" x1="0" y1="0" x2="0" y2="1"><stop offset="0" stopColor="#d6d6d6" /><stop offset="1" stopColor="#d1d1d1" /></linearGradient>
        <linearGradient id="top" x1="0" y1="0" x2="0" y2="1"><stop offset="0" stopColor="#ececec" /><stop offset="1" stopColor="#e4e4e4" /></linearGradient>
      </defs>
      <g fill="none" stroke="#a8abb2" strokeWidth="3">
        <path d="M459 93L481 1050L498 1046M466 296l18-4M473 687l17-5" />
        <path d="M976 200L952 1177L930 1162M948 397l22 13M938 793l24 15" />
        <path d="M516 1080L498 1087L755 1290L928 1212L910 1199M561 1138l16-8M624 1188l16-8M690 1240l16-9M841 1251l-18-13" />
        <path d="M645 32v14M690 36v18M758 75v20M828 116v20M901 157v22M552 64v12" opacity=".7" />
      </g>
      <path d="M478 103L760 275L755 1265L498 1065z" fill="url(#side)" />
      <path d="M760 275L949 208L930 1188L755 1265z" fill="#999" />
      <path d="M478 103L664 42L949 208L760 275z" fill="url(#top)" />
      <path d="M478 103L664 42L949 208L930 1188L755 1265L498 1065zM478 103L760 275L949 208M760 275L755 1265" fill="none" stroke="#444" strokeWidth="3" />
      <g fontSize="20" fill="#222">
        {TICKS.map(([x, y, t], i) => <text key={i} x={x} y={y}>{t}</text>)}
        <text x="30" y="1286">y</text><text x="67" y="1261">z</text><text x="117" y="1294">x</text>
      </g>
      <g strokeWidth="3.500">
        <path d="M74 1309V1278" stroke="#3878b8" /><path d="M74 1266l6 16h-12z" fill="#3878b8" />
        <path d="M74 1309L54 1297" stroke="#4caf50" /><path d="M44 1290l17 3-6 9z" fill="#4caf50" />
        <path d="M74 1309l24-9" stroke="#d8206b" /><path d="M111 1295l-12 10-5-10z" fill="#d8206b" />
      </g>
    </svg>
  );
}

/* ---------- opened drop-downs ---------- */

const openTone = "bg-[#b2d9fa] border-[#3a9bea] text-[#1c1c1c] ";

function SnipHead({ children, className, caret }) {
  return <h3 className={"flex items-center bg-[#dfe8f5] " + className}><Caret className={"text-[#444] " + caret} />{children}</h3>;
}

function OpenList({ items, on, tone, row }) {
  return (
    <ul role="listbox" aria-label="Options" className="absolute z-10 left-0 right-0 top-full border border-[#cfd1d6] bg-[#fafbff] shadow-[3px_3px_2px_#6668]">
      {items.map((t) => (
        <li key={t} role="option" aria-selected={t === on} className={"flex items-center pl-1 " + row + (t === on ? " " + tone : "")}>{t}</li>
      ))}
    </ul>
  );
}

function Snippets() {
  const blue = "bg-[#c6e4f5] outline outline-1 -outline-offset-1 outline-[#3aa0d8]";
  return (
    <div className="flex flex-col text-[#111]">
      <section className="w-[71%] h-[68px] border-x border-[#b9dcf8] bg-[#fafbff] text-[8px] leading-[10px]">
        <SnipHead className="h-[19px] pl-1" caret="w-[6px] h-[4px] mr-[8px]">Object Type</SnipHead>
        <div className="flex items-center h-[27px] pl-1 pr-[3px]">
          <label htmlFor="s1" className="w-[25px]">Type:</label>
          <div className="relative flex flex-1">
            <Select id="s1" value="Solid" tone={openTone} className="h-[15px] pl-[7px] text-[8px]" caret="w-[5px] h-[3px]" />
            <OpenList items={["Solid", "Surface"]} on="Solid" tone="bg-[#f1f1f2]" row="h-[12px]" />
          </div>
        </div>
        <SnipHead className="h-[19px] pl-1" caret="w-[6px] h-[4px] mr-[8px]">Siz</SnipHead>
      </section>

      <section className="mt-[124px] w-[86%] h-[116px] border-l border-[#b9dcf8] bg-[#fafbff] text-[10px] leading-[12px]">
        <SnipHead className="h-[23px] pl-1" caret="w-[7px] h-[4px] mr-[10px]">Position</SnipHead>
        <div className="flex items-center h-[29px] pt-[3px] pl-1 pr-[21px]">
          <label htmlFor="s2" className="w-[31px]">Base:</label>
          <div className="relative flex flex-1">
            <Select id="s2" value="Corner" tone={openTone} className="h-[18px] pl-[9px] text-[10px]" caret="w-[6px] h-[4px]" />
            <OpenList items={["Center", "Corner"]} on="Corner" tone={blue} row="h-[16px]" />
          </div>
        </div>
        {["x:", "y:", "z:"].map((l) => (
          <div key={l} className="flex items-center h-5 pl-1 pr-1">
            <label htmlFor={"p" + l} className="w-[31px]">{l}</label>
            <input id={"p" + l} defaultValue="0" className={inputTone + "h-[16px] px-px text-[10px]"} />
            <span className="w-[17px] text-right">m</span>
          </div>
        ))}
      </section>

      <section className="mt-5 h-[153px] border-x border-[#b9dcf8] bg-[#fafbff] text-[11px] leading-[14px]">
        <SnipHead className="h-[26px] pl-1.5" caret="w-[8px] h-[5px] mr-[12px]">Axis</SnipHead>
        <div className="flex items-center h-[37px] pl-[5px] pr-[6px]">
          <label htmlFor="s3" className="w-[58px]">Axis type:</label>
          <div className="relative flex flex-1">
            <Select id="s3" value="z-axis" tone={openTone} className="h-[20px] pl-3 text-[11px]" caret="w-[7px] h-[4px]" />
            <OpenList items={["x-axis", "y-axis", "z-axis", "Cartesian", "Spherical"]} on="z-axis" tone={blue} row="h-[18px]" />
          </div>
        </div>
        <SnipHead className="h-[25px] mt-px pl-1.5" caret="w-[8px] h-[5px] mr-[12px]">Rotatio</SnipHead>
        <div className="flex items-center h-[36px] pl-[5px] pr-[6px]">
          <label htmlFor="s4" className="w-[55px]">Rotation:</label>
          <input id="s4" className={inputTone + "h-[18px]"} />
        </div>
        <SnipHead className="h-[25px] mt-[2px] pl-1.5" caret="w-[8px] h-[5px] mr-[12px]">Coordi</SnipHead>
      </section>
    </div>
  );
}

export default function App() {
  return (
    <main className="relative w-full min-w-[1300px] bg-white pb-[36px] font-['Open_Sans',sans-serif]">
      <div className="flex items-start pl-[74px] pr-[3px]">
        <div className="flex-[654] min-w-0 pt-[146px]">
          <MainWindow />
          <div className="flex h-[526px] border-r border-[#b9dcf8]">
            <div className="w-[174px] border-l border-[#e4e6ea]"><BlockSettings /></div>
            <section className="flex flex-1 min-w-0 flex-col ml-px border-t border-b border-[#b9dcf8] bg-linear-to-b from-[#fafbff] from-15% to-[#e3f0fe]">
              <GraphicsHead big />
              <div className="flex h-[18px] justify-end items-center pr-[4px] pt-[2px] -mb-[18px]"><LegendIcon className="w-[9px] h-[9px]" /></div>
              <BlockPlot />
            </section>
          </div>
        </div>
        <div className="ml-[39px] flex-[324] min-w-0 pt-[19px]"><BlockSettings big /></div>
        <div className="relative z-20 ml-1 flex-[304] min-w-0 pt-[136px]"><Snippets /></div>
      </div>
      <p className="mt-[42px] pr-[38px] text-center text-[24px] leading-8 text-black font-['Liberation_Sans',sans-serif]">
        COMSOL is not born for CAD, so try to model the geometry use CAD software if possible.
      </p>
      <svg viewBox="0 0 1402 1312" preserveAspectRatio="none" className="pointer-events-none absolute inset-0 w-full h-full" fill="none" stroke="#d4203c" strokeOpacity=".57" strokeWidth="6" aria-hidden="true">
        <rect x="339" y="152" width="27" height="53" />
        <path d="M366 206C400 265 455 320 500 363C570 430 680 510 762 595" />
        <path d="M735 572L762 595L751 562" />
        <path d="M24 409L139 323" />
        <path d="M107 331L139 323L121 350" />
      </svg>
    </main>
  );
}
